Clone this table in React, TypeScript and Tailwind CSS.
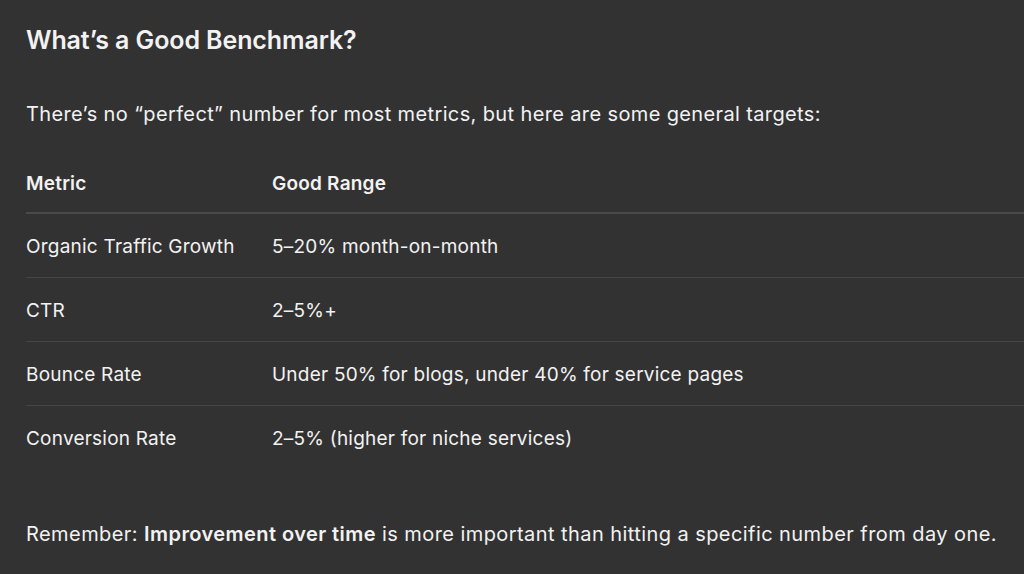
import React from "react";

const rows: [string, string][] = [
  ["Organic Traffic Growth", "5–20% month-on-month"],
  ["CTR", "2–5%+"],
  ["Bounce Rate", "Under 50% for blogs, under 40% for service pages"],
  ["Conversion Rate", "2–5% (higher for niche services)"],
];

export default function App() {
  return (
    <div
      className="w-[1024px] h-[574px] overflow-hidden bg-[#323232] text-[#f2f2f2] pl-[26px]"
      style={{ fontFamily: "Inter, 'Noto Sans', sans-serif" }}
    >
      <h2 className="text-[25px] font-semibold leading-[30px] pt-[25px] tracking-[-0.1px]">
        What’s a Good Benchmark?
      </h2>
      <p className="text-[20px] leading-[28px] mt-[45px] tracking-[0.37px]">
        There’s no “perfect” number for most metrics, but here are some general targets:
      </p>
      <table className="mt-[26px] w-[1100px] text-[19px] leading-[27px] border-collapse tracking-[0.22px]">
        <thead>
          <tr className="border-b-2 border-[#4a4a4a]">
            <th className="text-left font-semibold w-[246px] pt-[16px] pb-[15px]">Metric</th>
            <th className="text-left font-semibold pt-[16px] pb-[15px]">Good Range</th>
          </tr>
        </thead>
        <tbody>
          {rows.map(([a, b], i) => (
            <tr key={a} className={i < rows.length - 1 ? "border-b border-[#444444]" : ""}>
              <td className="pt-[19px] pb-[17px]">{a}</td>
              <td className="pt-[19px] pb-[17px]">{b}</td>
            </tr>
          ))}
        </tbody>
      </table>
      <p className="text-[20px] leading-[28px] mt-[51px] tracking-[0.43px]">
        Remember: <strong className="font-semibold">Improvement over time</strong> is more important than hitting a specific number from day one.
      </p>
    </div>
  );
}
